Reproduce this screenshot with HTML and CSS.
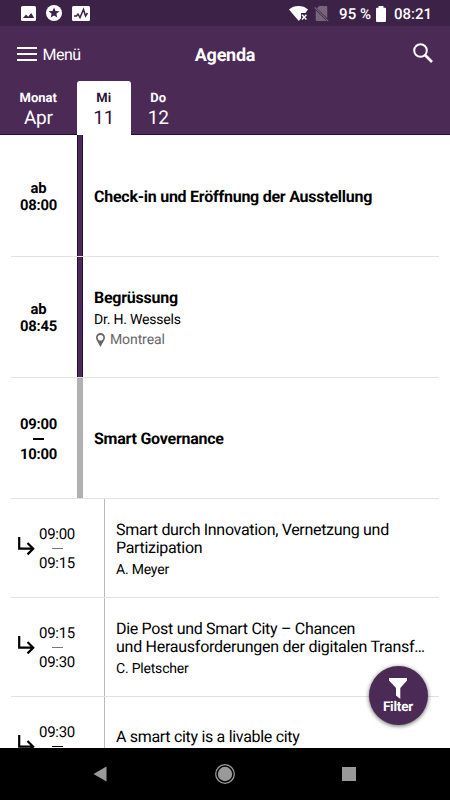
FILE: index.html
```html
<!DOCTYPE html>
<html lang="de">
<head>
<meta charset="utf-8">
<title>Agenda</title>
<link rel="stylesheet" href="styles.css">
</head>
<body>
<div class="screen">
  <div class="statusbar">
    <div class="notices">
      <svg width="15" height="15" viewBox="0 0 15 15"><rect width="15" height="15" rx="1.5" fill="#fff"/><path d="M2 12l3-3.500 2.200 2.200 3-3.700 3 5z" fill="#3c2246"/></svg>
      <svg width="16" height="16" viewBox="0 0 16 16"><circle cx="8" cy="8" r="8" fill="#fff"/><path d="M8 2.500l1.500 3.500 3.900.3-3 2.500.9 3.800L8 10.600l-3.300 2 .9-3.800-3-2.500L6.500 6z" fill="#3c2246"/></svg>
      <svg width="18" height="15" viewBox="0 0 18 15"><rect width="18" height="15" rx="1.500" fill="#fff"/><path d="M2 10h2.500l1.500-2 2 3.500L11.500 3.500l2 6.500L15.500 7" fill="none" stroke="#3c2246" stroke-width="1.500"/></svg>
    </div>
    <div class="device">
      <svg class="wifi" width="19" height="15" viewBox="0 0 19 15"><path d="M0 3.500C5-1.100 14-1.100 19 3.500L16.400 7H12v5.200L9.800 15z" fill="#fff"/><path d="M13 8.700l4.400 4.800M17.400 8.700L13 13.500" stroke="#fff" stroke-width="1.400"/></svg>
      <svg class="sim" width="15" height="16" viewBox="0 0 15 16"><path d="M5.200 0H12q1.300 0 1.300 1.300V12.300L3 2.200zM1.700 4.300L12.500 15H3q-1.300 0-1.300-1.300z" fill="#77657e"/><path d="M.7 1.300l13.500 13.900" stroke="#77657e" stroke-width="1.200"/></svg>
      <span class="percent">95 %</span>
      <svg class="battery" width="10" height="16" viewBox="0 0 10 16"><path d="M2.500 0h5v1.700H9q1 0 1 1V15q0 1-1 1H1q-1 0-1-1V2.700q0-1 1-1h1.500z" fill="#fff"/></svg>
      <span>08:21</span>
    </div>
  </div>
  <header class="header">
    <div class="toolbar">
      <div class="menu"><span class="burger"><i></i><i></i><i></i></span><span class="menu-label">Menü</span></div>
      <h1>Agenda</h1>
      <svg class="search" width="20" height="21" viewBox="0 0 20 21"><circle cx="7.500" cy="7.500" r="6.300" fill="none" stroke="#fff" stroke-width="2"/><path d="M12 12l7 7" stroke="#fff" stroke-width="2.600"/></svg>
    </div>
    <div class="tabs">
      <div class="tab month"><b>Monat</b><span>Apr</span></div>
      <div class="tab active"><b>Mi</b><span>11</span></div>
      <div class="tab"><b>Do</b><span>12</span></div>
    </div>
  </header>
  <main class="list">
    <section class="row">
      <div class="time"><span>ab</span><span>08:00</span></div><div class="bar"></div>
      <div class="info"><h2>Check-in und Eröffnung der Ausstellung</h2></div>
    </section>
    <section class="row">
      <div class="time"><span>ab</span><span>08:45</span></div><div class="bar"></div>
      <div class="info detailed"><h2>Begrüssung</h2><p class="speaker">Dr. H. Wessels</p>
        <p class="place"><svg width="9" height="14" viewBox="0 0 9 14"><path fill="#666" fill-rule="evenodd" d="M4.500 0A4.500 4.500 0 0 1 9 4.500C9 7.500 6 10 5 13.500H4C3 10 0 7.500 0 4.500A4.500 4.500 0 0 1 4.500 0zM4.500 1.900a2.800 2.800 0 1 0 0 5.600 2.800 2.800 0 0 0 0-5.600z"/></svg><span>Montreal</span></p></div>
    </section>
    <section class="row">
      <div class="time"><span>09:00</span><i class="dash"></i><span>10:00</span></div><div class="bar grey"></div>
      <div class="info"><h2>Smart Governance</h2></div>
    </section>
    <section class="row sub">
      <svg class="arrow" width="17" height="19" viewBox="0 0 17 19"><path d="M1.200 0v11.700h13.800M9.500 6l5.700 5.700-5.700 5.700" fill="none" stroke="#000" stroke-width="2.200"/></svg>
      <div class="time"><span>09:00</span><i class="dash"></i><span>09:15</span></div><div class="bar"></div>
      <div class="info"><h3>Smart durch Innovation, Vernetzung und<br>Partizipation</h3><p class="speaker">A. Meyer</p></div>
    </section>
    <section class="row sub">
      <svg class="arrow" width="17" height="19" viewBox="0 0 17 19"><path d="M1.200 0v11.700h13.800M9.500 6l5.700 5.700-5.700 5.700" fill="none" stroke="#000" stroke-width="2.200"/></svg>
      <div class="time"><span>09:15</span><i class="dash"></i><span>09:30</span></div><div class="bar"></div>
      <div class="info"><h3>Die Post und Smart City – Chancen<br><span class="tight">und Herausforderungen der digitalen Transf…</span></h3><p class="speaker">C. Pletscher</p></div>
    </section>
    <section class="row sub partial">
      <svg class="arrow" width="17" height="19" viewBox="0 0 17 19"><path d="M1.200 0v11.700h13.800M9.500 6l5.700 5.700-5.700 5.700" fill="none" stroke="#000" stroke-width="2.200"/></svg>
      <div class="time"><span>09:30</span><i class="dash dark"></i></div><div class="bar"></div>
      <div class="info"><h3>A smart city is a livable city</h3></div>
    </section>
  </main>
  <nav class="navbar">
    <svg width="14" height="16" viewBox="0 0 14 16"><path d="M13.500.500v15L.5 8z" fill="#999"/></svg>
    <svg width="22" height="22" viewBox="0 0 22 22"><circle cx="11" cy="11" r="9.300" fill="none" stroke="#999" stroke-width="1.300"/><circle cx="11" cy="11" r="7.200" fill="#999"/></svg>
    <svg width="14" height="14" viewBox="0 0 14 14"><rect width="14" height="14" fill="#999"/></svg>
  </nav>
  <div class="fab"><svg width="18" height="21" viewBox="0 0 18 21"><path d="M0 0h18v2.500L11.300 10v11L7 17.500V10L0 2.500z" fill="#fff"/></svg><span>Filter</span></div>
</div>
</body>
</html>
```
FILE: styles.css
```css
* { box-sizing: border-box; margin: 0; padding: 0; }
body { font-family: Roboto, "Liberation Sans", sans-serif; color: #000; background: #fff; text-rendering: geometricPrecision; }
.screen { position: relative; width: 450px; height: 800px; overflow: hidden; display: flex; flex-direction: column; }
.statusbar { height: 26px; flex: none; background: #3c2246; color: #fff; display: flex; justify-content: space-between; padding: 0 18px 0 21px; font-size: 15px; }
.notices, .device { display: flex; align-items: center; }
.notices { gap: 10px; }
.device { padding-top: 1px; font-weight: 500; }
.wifi { margin-right: -1px; }
.sim { margin: 0 10px 0 7px; }
.battery { margin: 0 8px 0 5px; }
.header { height: 109px; flex: none; background: #4c2a56; color: #fff; border-bottom: 1px solid #2a0845; display: flex; flex-direction: column; }
.toolbar { height: 54px; display: grid; grid-template-columns: 1fr auto 1fr; align-items: center; padding: 3px 17px 0 17px; }
.menu { display: flex; align-items: center; gap: 5.500px; font-size: 16px; letter-spacing: -.5px; }
.burger { display: flex; flex-direction: column; gap: 4px; width: 20px; margin-top: -1px; }
.burger i { height: 2px; background: #fff; }
h1 { font-size: 18px; font-weight: 700; letter-spacing: -.25px; padding-top: 1px; }
.search { justify-self: end; margin-top: -2px; }
.tabs { display: flex; height: 54px; flex: none; padding-top: 1px; }
.tab { width: 54.500px; display: flex; flex-direction: column; align-items: center; padding-top: 10px; }
.month { width: 76.500px; }
.tab b { font-size: 13px; line-height: 16px; font-weight: 700; }
.tab span { font-size: 19px; line-height: 21px; letter-spacing: -.3px; }
.active { background: #fff; color: #2d1538; border-radius: 3px 3px 0 0; height: 54px; }
.list { flex: 1; min-height: 0; overflow: hidden; }
.row { height: 121px; margin: 0 11px; border-bottom: 1px solid #e2e2e2; display: flex; align-items: stretch; }
.row:first-child { height: 122px; }
.time { width: 55px; margin-right: 11px; padding-top: 2px; display: flex; flex-direction: column; align-items: center; justify-content: center; font-size: 14.800px; line-height: 17px; font-weight: 700; letter-spacing: -.2px; }
.bar { width: 6px; background: #4c2a56; border: solid #2a0845; border-width: 0 1px; }
.bar.grey { background: #b0b0b0; border: 0; }
.dash { width: 11px; height: 2px; margin: 5.500px 0; background: #000; }
.info { padding: 2px 0 0 11px; display: flex; flex-direction: column; justify-content: center; white-space: nowrap; }
.detailed { padding-top: 4px; }
.detailed .place { top: 0; }
h2 { font-size: 16px; line-height: 20px; font-weight: 700; letter-spacing: -.25px; }
.speaker { font-size: 14px; line-height: 22px; letter-spacing: -.2px; position: relative; top: 1px; }
.place { font-size: 14px; line-height: 20px; color: #666; display: flex; align-items: center; gap: 5px; padding-left: 2px; letter-spacing: -.1px; position: relative; }
.row.sub { height: 99px; }
.sub .arrow { margin: 38px 0 0 7px; flex: none; }
.sub .time { width: 44px; margin: 0 25px 0 0; padding-top: 0; font-weight: 400; font-size: 15px; line-height: 16px; letter-spacing: -.3px; }
.sub .dash { height: 1px; margin: 6px 0; background: #777; }
.sub .dash.dark { background: #000; }
.sub .bar { width: 1px; background: #bbb; border: 0; }
h3 { font-size: 16px; line-height: 18px; font-weight: 400; letter-spacing: -.31px; }
.tight { letter-spacing: -.26px; }
.sub .info { padding-top: 4px; }
.sub .speaker { line-height: 20px; padding-top: 2px; }
.sub.partial { height: 51px; border-bottom: 0; }
.sub.partial .time { justify-content: flex-start; padding-top: 27px; }
.partial .dash { margin-bottom: 0; }
.sub.partial .info { justify-content: flex-start; padding-top: 31px; }
.navbar { height: 52px; flex: none; background: #000; display: flex; justify-content: space-between; align-items: center; padding: 0 94px 0 93px; }
.fab { position: absolute; left: 368.500px; top: 666px; width: 59px; height: 59px; border-radius: 50%; background: #4c2a56; color: #fff; display: flex; flex-direction: column; align-items: center; padding-top: 12px; font-size: 13.500px; letter-spacing: -.2px; line-height: 16px; font-weight: 700; box-shadow: 0 1px 4px rgba(0,0,0,.6); }
```
